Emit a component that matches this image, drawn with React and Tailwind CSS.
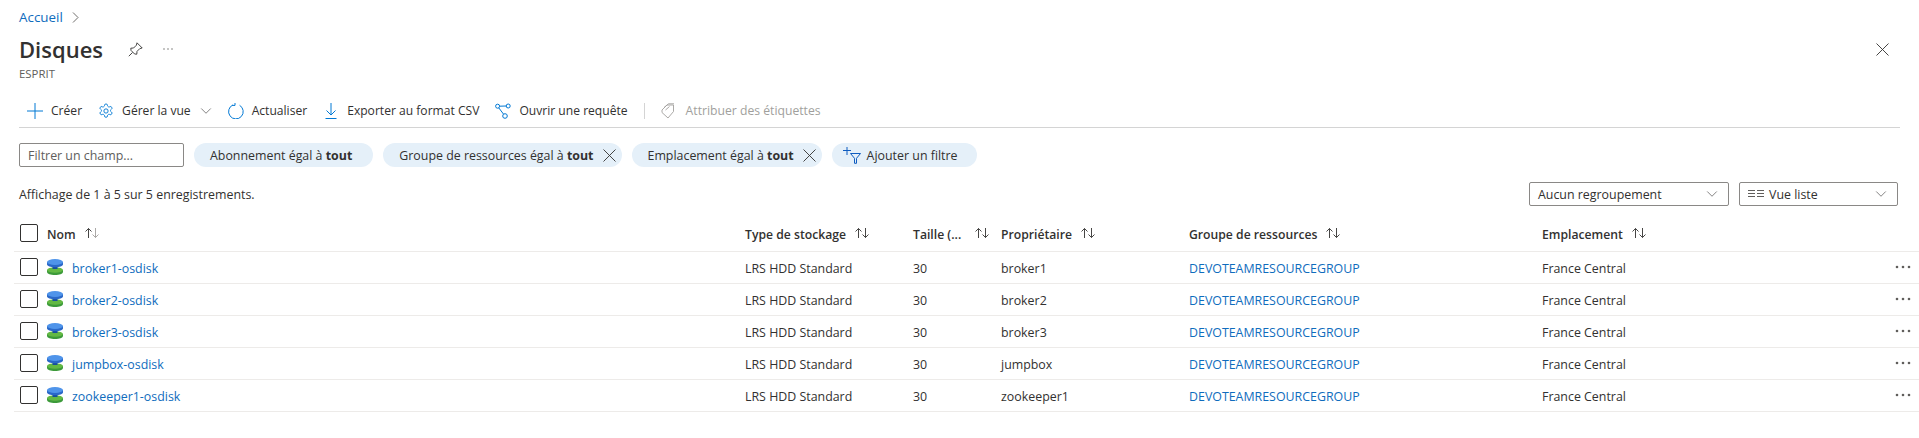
import { ChevronDown } from 'lucide-react';

const rows = ['broker1', 'broker2', 'broker3', 'jumpbox', 'zookeeper1'];
const grid = 'grid grid-cols-[731px_168px_88px_188px_353px_1fr]';

function SortArrows({ dim }) {
  return (
    <svg width="16" height="12" viewBox="0 0 16 12" fill="none" className="shrink-0">
      <path d="M4.5 11V1.5M1.5 4.5l3-3 3 3" stroke="#323130" strokeWidth="0.9" />
      <path d="M11.5 1v9.5M8.5 7.5l3 3 3-3" stroke={dim ? '#a19f9d' : '#323130'} strokeWidth="0.9" />
    </svg>
  );
}

function Checkbox() {
  return <div className="shrink-0 w-[18px] h-[18px] rounded-[2px] border border-[#323130]" />;
}

function CloseIcon({ size = 13 }) {
  return (
    <svg width={size} height={size} viewBox="0 0 13 13" fill="none" stroke="#323130" strokeWidth="0.9" className="shrink-0">
      <path d="M0.5 0.5l12 12M12.5 0.5l-12 12" />
    </svg>
  );
}

function DiskIcon() {
  return (
    <svg width="16" height="16" viewBox="0 0 16 16" className="shrink-0">
      <path d="M0 11v2c0 1.7 3.6 3 8 3s8-1.3 8-3v-2z" fill="#3c9a3a" />
      <ellipse cx="8" cy="11" rx="8" ry="2.8" fill="#63b944" />
      <rect x="5.5" y="6" width="5" height="4" fill="#174f9c" />
      <path d="M0 3v2.4c0 1.6 3.6 2.8 8 2.8s8-1.2 8-2.8V3z" fill="#2a68c8" />
      <ellipse cx="8" cy="3" rx="8" ry="3" fill="#4f94ea" />
    </svg>
  );
}

function PlusIcon() {
  return (
    <svg width="16" height="16" viewBox="0 0 16 16" fill="none" stroke="#0078d4" strokeWidth="1" className="shrink-0">
      <path d="M8 0v16M0 8h16" />
    </svg>
  );
}

function GearIcon() {
  return (
    <svg width="16" height="16" viewBox="0 0 24 24" fill="none" stroke="#0078d4" strokeWidth="1.4" className="shrink-0">
      <path d="M12.2 1.5h-.4a2 2 0 0 0-2 2v.2a2 2 0 0 1-1 1.7l-.4.3a2 2 0 0 1-2 0l-.2-.1a2 2 0 0 0-2.7.7l-.2.4a2 2 0 0 0 .7 2.7l.2.1a2 2 0 0 1 1 1.7v.5a2 2 0 0 1-1 1.7l-.2.1a2 2 0 0 0-.7 2.7l.2.4a2 2 0 0 0 2.7.7l.2-.1a2 2 0 0 1 2 0l.4.3a2 2 0 0 1 1 1.7v.2a2 2 0 0 0 2 2h.4a2 2 0 0 0 2-2v-.2a2 2 0 0 1 1-1.7l.4-.3a2 2 0 0 1 2 0l.2.1a2 2 0 0 0 2.7-.7l.2-.4a2 2 0 0 0-.7-2.7l-.2-.1a2 2 0 0 1-1-1.7v-.5a2 2 0 0 1 1-1.7l.2-.1a2 2 0 0 0 .7-2.7l-.2-.4a2 2 0 0 0-2.7-.7l-.2.1a2 2 0 0 1-2 0l-.4-.3a2 2 0 0 1-1-1.7v-.2a2 2 0 0 0-2-2z" />
      <circle cx="12" cy="12" r="3.2" />
    </svg>
  );
}

function RefreshIcon() {
  return (
    <svg width="16" height="16" viewBox="0 0 16 16" fill="none" stroke="#0078d4" strokeWidth="1" className="shrink-0">
      <path d="M5 1.9a7.3 7.3 0 1 0 6.6.4" />
      <path d="M7 0v2.4H4.2" />
    </svg>
  );
}

function ExportIcon() {
  return (
    <svg width="16" height="16" viewBox="0 0 16 16" fill="none" stroke="#0078d4" strokeWidth="1" className="shrink-0">
      <path d="M8 0v12M3.5 7.5 8 12l4.5-4.5" />
      <path d="M2.5 15.5h11" />
    </svg>
  );
}

function QueryIcon() {
  return (
    <svg width="16" height="16" viewBox="0 0 16 16" fill="none" stroke="#0078d4" strokeWidth="1" className="shrink-0">
      <circle cx="2.6" cy="3.2" r="2" />
      <circle cx="13.2" cy="3" r="2" />
      <circle cx="10" cy="13" r="2.3" />
      <path d="M4.6 3.2 11.2 3M3.8 4.9l4.7 6.2" />
    </svg>
  );
}

function TagIcon() {
  return (
    <svg width="14" height="16" viewBox="0 0 14 16" fill="none" stroke="#a19f9d" strokeWidth="0.9" className="shrink-0">
      <path d="M1 7 6 2h6.5v6.5L7 15 1 9.5z" />
      <path d="M3 4.5 7.5 0.8H13M4.5 7l4-3.5" />
    </svg>
  );
}

function FilterAddIcon() {
  return (
    <svg width="18" height="17" viewBox="0 0 18 17" fill="none" stroke="#0f5cc0" strokeWidth="1" className="shrink-0">
      <path d="M0 3.5h8M4 0v8" />
      <path d="M7.5 6.5h10l-4 4.8v5h-2v-5z" />
    </svg>
  );
}

function ListIcon() {
  return (
    <svg width="16" height="10" viewBox="0 0 16 10" fill="none" stroke="#605e5c" strokeWidth="1" className="shrink-0">
      <path d="M0 1.5h7M0 4.5h7M0 7.5h7M9 1.5h7M9 4.5h7M9 7.5h7" />
    </svg>
  );
}

function Dots({ r = 1.3, gap = 6, width = 16, color = '#605e5c' }) {
  return (
    <svg width={width} height="6" viewBox={`0 0 ${width} 6`} fill={color} className="shrink-0">
      <circle cx={width / 2 - gap} cy="3" r={r} />
      <circle cx={width / 2} cy="3" r={r} />
      <circle cx={width / 2 + gap} cy="3" r={r} />
    </svg>
  );
}

function ToolButton({ icon, label }) {
  return (
    <div className="flex items-center">
      {icon}
      <span className="ml-[8px]">{label}</span>
    </div>
  );
}

function Chip({ label, close }) {
  return (
    <div className={`h-6 rounded-full bg-[#e5f0f9] flex items-center pl-4 ${close ? 'pr-[6px]' : 'pr-[21px]'}`}>
      <span className="pt-[2px]">{label} <b className="font-bold">tout</b></span>
      {close && <span className="ml-[9px]"><CloseIcon /></span>}
    </div>
  );
}

function Select({ width, children }) {
  return (
    <div className={`${width} h-6 border border-[#8a8886] rounded-[2px] flex items-center justify-between pl-[8px] pr-[7px]`}>
      <div className="flex items-center">{children}</div>
      <ChevronDown size={18} strokeWidth={0.8} className="text-[#323130]" />
    </div>
  );
}

export default function App() {
  return (
    <div className="h-[438px] bg-white text-[#323130] text-[12.4px] overflow-hidden font-['Open_Sans','Noto_Sans',sans-serif]">
      <div className="pl-[19px] pt-[7px] h-[28px] flex items-center text-[#0f6cbd] text-[13.4px]">
        Accueil
        <svg width="7" height="11" viewBox="0 0 7 11" fill="none" stroke="#605e5c" strokeWidth="0.9" className="ml-[9px]">
          <path d="M1 0.5 6 5.5l-5 5" />
        </svg>
      </div>

      <div className="mt-[3px] pl-[19px] pr-[30px] h-[36px] flex items-center">
        <h1 className="text-[22px] font-semibold leading-none">Disques</h1>
        <svg width="15" height="15" viewBox="0 0 15 15" fill="none" stroke="#323130" strokeWidth="0.9" className="ml-[25px]">
          <path d="M9 0.8 14.2 6l-2.4.6-2.8 2.8-.2 2.8-2.2-.2-3.6-3.6-.2-2.2 2.8-.2 2.8-2.8zM4.5 10.5 0.8 14.2" />
        </svg>
        <span className="ml-[19px]"><Dots r={0.7} gap={4} width={12} /></span>
        <span className="ml-auto"><CloseIcon /></span>
      </div>

      <div className="pl-[19px] text-[11.4px] text-[#605e5c] leading-[12px] mt-[1px]">ESPRIT</div>

      <div className="mt-[15px] mx-[19px] h-[33px] text-[12.1px] flex items-center gap-4 border-b border-[#d4d4d4] pl-[8px]">
        <ToolButton icon={<PlusIcon />} label="Créer" />
        <div className="flex items-center">
          <ToolButton icon={<GearIcon />} label="Gérer la vue" />
          <ChevronDown size={18} strokeWidth={0.8} className="ml-[6px] -mr-[3px] text-[#323130]" />
        </div>
        <ToolButton icon={<RefreshIcon />} label="Actualiser" />
        <ToolButton icon={<ExportIcon />} label="Exporter au format CSV" />
        <ToolButton icon={<QueryIcon />} label="Ouvrir une requête" />
        <div className="w-px h-4 bg-[#d4d4d4]" />
        <div className="flex items-center text-[#a19f9d]">
          <TagIcon />
          <span className="ml-[11px] text-[12.2px]">Attribuer des étiquettes</span>
        </div>
      </div>

      <div className="mt-[15px] ml-[19px] flex items-center gap-[10px]">
        <div className="w-[165px] h-6 border border-[#8a8886] rounded-[2px] flex items-center pl-[8px] pt-[2px] text-[#605e5c]">Filtrer un champ...</div>
        <Chip label="Abonnement égal à" />
        <Chip label="Groupe de ressources égal à" close />
        <Chip label="Emplacement égal à" close />
        <div className="h-6 rounded-full bg-[#e5f0f9] flex items-center pl-[11px] pr-[19px]">
          <FilterAddIcon />
          <span className="ml-[6px] pt-[2px]">Ajouter un filtre</span>
        </div>
      </div>

      <div className="mt-[15px] ml-[19px] mr-[21px] h-6 flex items-center justify-between">
        <span className="pt-[2px]">Affichage de 1 à 5 sur 5 enregistrements.</span>
        <div className="flex gap-[10px]">
          <Select width="w-[200px]"><span className="pt-[2px]">Aucun regroupement</span></Select>
          <Select width="w-[159px]">
            <span className="mr-[5px]"><ListIcon /></span>
            <span className="pt-[2px]">Vue liste</span>
          </Select>
        </div>
      </div>

      <div className="mt-[10px] ml-[14px]">
        <div className={`${grid} h-[36px] items-center border-b border-[#edebe9] font-semibold text-[12.2px]`}>
          <div className="pl-[6px] flex items-center whitespace-nowrap">
            <Checkbox />
            <span className="ml-[9px] mr-[8px] pt-[3px]">Nom</span>
            <SortArrows dim />
          </div>
          <div className="flex items-center gap-2"><span className="pt-[3px]">Type de stockage</span><SortArrows /></div>
          <div className="flex items-center"><span className="pt-[3px]">Taille (...</span><span className="ml-[13px]"><SortArrows /></span></div>
          <div className="flex items-center gap-2"><span className="pt-[3px]">Propriétaire</span><SortArrows /></div>
          <div className="flex items-center gap-2"><span className="pt-[3px]">Groupe de ressources</span><SortArrows /></div>
          <div className="flex items-center gap-2"><span className="pt-[3px]">Emplacement</span><SortArrows /></div>
        </div>
        {rows.map((name) => (
          <div key={name} className={`${grid} h-[32px] items-center border-b border-[#edebe9]`}>
            <div className="pl-[6px] flex items-center whitespace-nowrap">
              <Checkbox />
              <span className="ml-[9px]"><DiskIcon /></span>
              <span className="text-[#0f6cbd] ml-[9px] pt-[4px]">{name}-osdisk</span>
            </div>
            <div className="pt-[4px]">LRS HDD Standard</div>
            <div className="pt-[4px]">30</div>
            <div className="pt-[4px]">{name}</div>
            <div className="pt-[4px] text-[#0f6cbd]">DEVOTEAMRESOURCEGROUP</div>
            <div className="flex items-center justify-between pr-[8px]">
              <span className="pt-[4px]">France Central</span>
              <Dots />
            </div>
          </div>
        ))}
      </div>
    </div>
  );
}
